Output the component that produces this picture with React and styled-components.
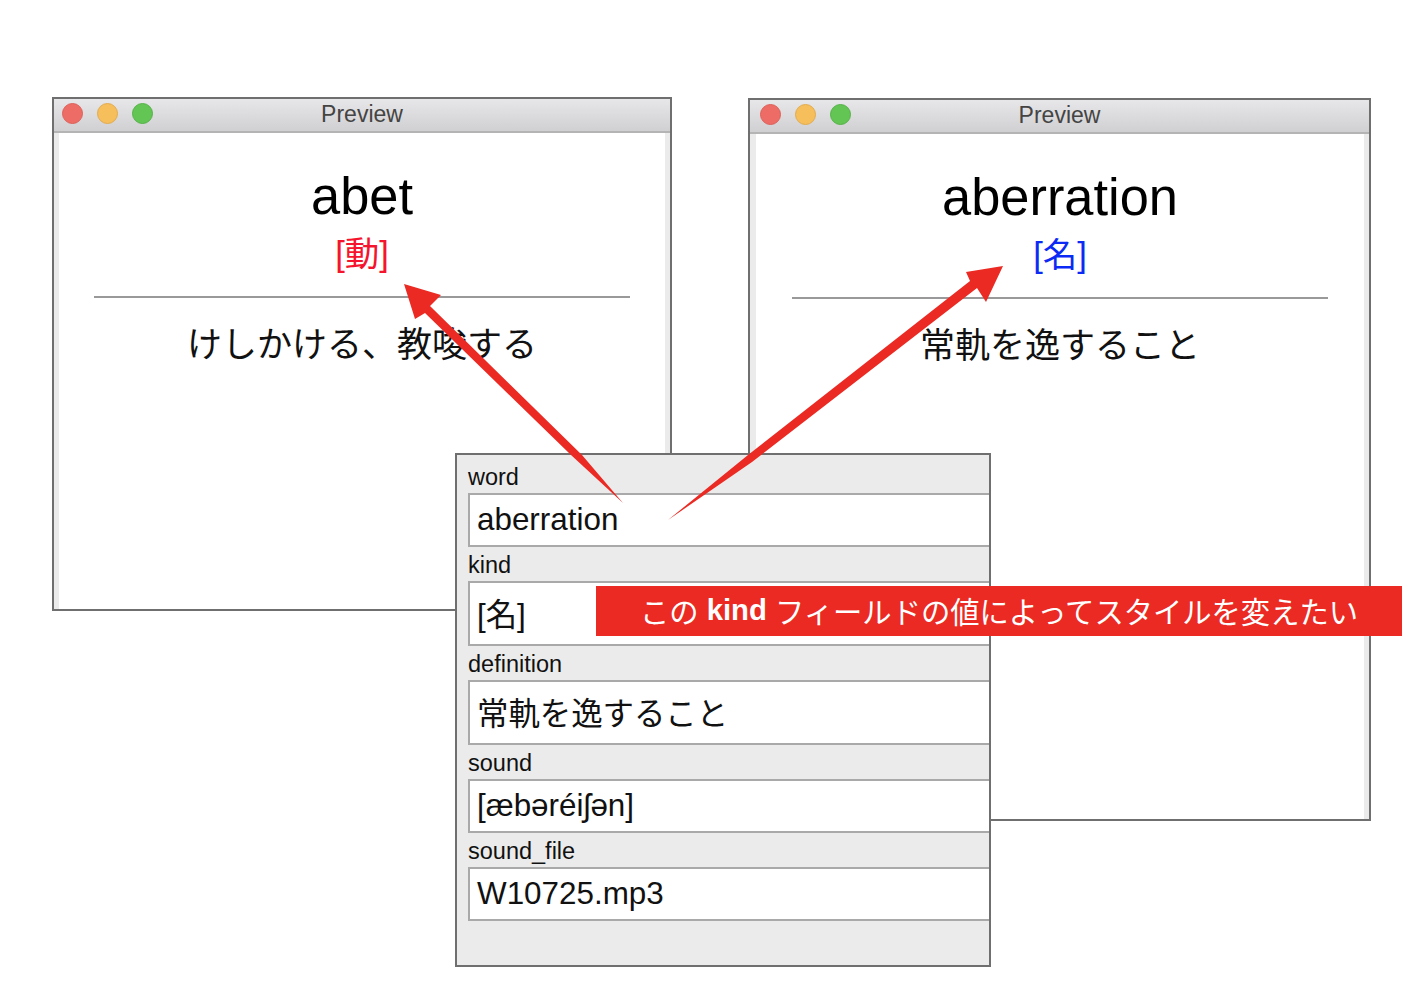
import styled, { createGlobalStyle } from "styled-components"

const FONT = `"Liberation Sans", "Noto Sans CJK JP", sans-serif`

const GlobalStyle = createGlobalStyle`
    html, body {
        margin: 0;
        background: #fff;
    }
    * {
        box-sizing: border-box;
    }
`

const FIELDS = [
    { label: "word", value: "aberration", height: 54 },
    { label: "kind", value: "[名]", height: 65 },
    { label: "definition", value: "常軌を逸すること", height: 65 },
    { label: "sound", value: "[æbəréiʃən]", height: 54 },
    { label: "sound_file", value: "W10725.mp3", height: 54 },
]

const PreviewWindow = ({ x, y, width, height, lightsLeft, stripLeft, word, kind, kindColor, definition }) => (
    <Win $x={x} $y={y} $width={width} $height={height}>
        <TitleBar>
            <Lights $left={lightsLeft}>
                <Light $color="#ee6c66" $edge="#dd5f59" />
                <Light $color="#f6bf5c" $edge="#e3ab4c" />
                <Light $color="#62c554" $edge="#55b248" />
            </Lights>
            Preview
        </TitleBar>
        <WinBody $left={stripLeft}>
            <Word>{word}</Word>
            <Kind $color={kindColor}>{kind}</Kind>
            <Rule />
            <Definition>{definition}</Definition>
        </WinBody>
    </Win>
)

const App = () => (
    <Canvas>
        <GlobalStyle />
        <PreviewWindow
            x={52} y={97} width={620} height={514}
            lightsLeft={8} stripLeft={5}
            word="abet" kind="[動]" kindColor="#f5142d"
            definition="けしかける、教唆する"
        />
        <PreviewWindow
            x={748} y={98} width={623} height={723}
            lightsLeft={10} stripLeft={6}
            word="aberration" kind="[名]" kindColor="#0b2bf5"
            definition="常軌を逸すること"
        />
        <FormPanel>
            {FIELDS.map((field) => (
                <div key={field.label}>
                    <FieldLabel>{field.label}</FieldLabel>
                    <FieldValue $height={field.height}>{field.value}</FieldValue>
                </div>
            ))}
        </FormPanel>
        <Arrows viewBox="0 0 1406 1000">
            <polygon points="404,284 441,295 430,306 582,455 623,503 571,455 425,313 415,319" />
            <polygon points="1003,266 986,302 977,288 752,462 668,520 748,455 970,281 966,272" />
        </Arrows>
        <Banner>この <b>kind</b> フィールドの値によってスタイルを変えたい</Banner>
    </Canvas>
)

export default App

const Canvas = styled.div`
    position: relative;
    width: 1406px;
    height: 1000px;
    overflow: hidden;
    font-family: ${FONT};
`

const Win = styled.div`
    position: absolute;
    left: ${(p) => p.$x}px;
    top: ${(p) => p.$y}px;
    width: ${(p) => p.$width}px;
    height: ${(p) => p.$height}px;
    display: flex;
    flex-direction: column;
    border: 2px solid #6f6f6f;
    background: #fff;
`

const TitleBar = styled.div`
    position: relative;
    height: 34px;
    flex-shrink: 0;
    display: flex;
    align-items: center;
    justify-content: center;
    padding-bottom: 2px;
    background: linear-gradient(#e7e6e8, #d0cfd1);
    border-bottom: 2px solid #b4b4b4;
    color: #444;
    font-size: 23px;
`

const Lights = styled.div`
    position: absolute;
    left: ${(p) => p.$left}px;
    top: 4px;
    display: flex;
    gap: 14px;
`

const Light = styled.span`
    width: 21px;
    height: 21px;
    border-radius: 50%;
    background: ${(p) => p.$color};
    border: 1px solid ${(p) => p.$edge};
`

const WinBody = styled.div`
    flex: 1;
    display: flex;
    flex-direction: column;
    align-items: center;
    padding-top: 33px;
    border-left: ${(p) => p.$left}px solid #ebebeb;
    border-right: 5px solid #ebebeb;
`

const Word = styled.div`
    font-size: 52.4px;
    line-height: 60px;
    color: #000;
`

const Kind = styled.div`
    margin-top: 6px;
    font-size: 34.5px;
    line-height: 44px;
    color: ${(p) => p.$color};
`

const Rule = styled.div`
    width: 536px;
    height: 2px;
    margin-top: 20px;
    background: #999;
`

const Definition = styled.div`
    margin-top: 22px;
    font-size: 35px;
    line-height: 50px;
    color: #111;
`

const FormPanel = styled.div`
    position: absolute;
    left: 455px;
    top: 453px;
    width: 536px;
    height: 514px;
    padding: 4px 0 0 11px;
    background: #ebebeb;
    border: 2px solid #6f6f6f;
`

const FieldLabel = styled.div`
    height: 34px;
    font-size: 23.5px;
    line-height: 36px;
    color: #111;
`

const FieldValue = styled.div`
    height: ${(p) => p.$height}px;
    display: flex;
    align-items: center;
    padding-left: 7px;
    padding-bottom: ${(p) => (p.$height > 60 ? 2 : 0)}px;
    background: #fff;
    border: 2px solid #a9a9a9;
    border-right: none;
    font-size: 31.4px;
    color: #111;
`

const Arrows = styled.svg`
    position: absolute;
    inset: 0;
    width: 1406px;
    height: 1000px;
    fill: #ea2a23;
    stroke: none;
`

const Banner = styled.div`
    position: absolute;
    left: 596px;
    top: 586px;
    width: 806px;
    height: 50px;
    display: flex;
    align-items: center;
    justify-content: center;
    padding-bottom: 2px;
    white-space: pre;
    background: #ea2a23;
    color: #fff;
    font-size: 29.3px;

    b {
        font-weight: 700;
    }
`
